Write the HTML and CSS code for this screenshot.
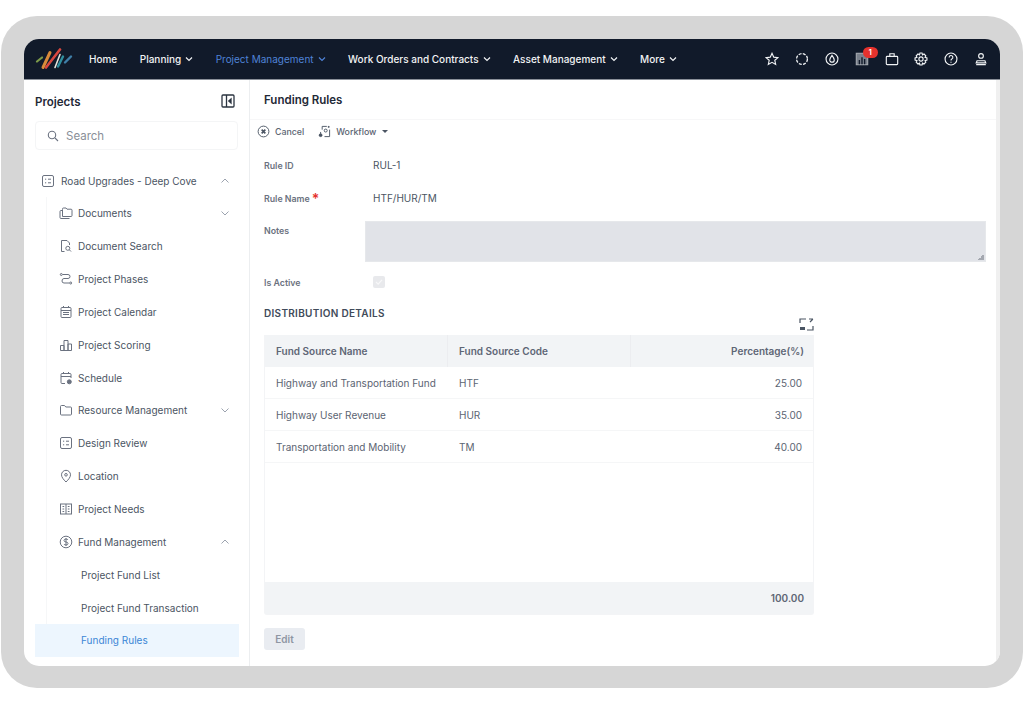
FILE: index.html
```html
<!DOCTYPE html>
<html lang="en">
<head>
    <meta charset="UTF-8">
    <meta name="viewport" content="width=device-width, initial-scale=1.0">
    <title>Funding Rules</title>
    <link rel="stylesheet" href="styles.css">
</head>
<body>
    <div class="frame">
        <div class="app">
            <!-- Top navigation -->
            <header class="topbar">
                <svg class="logo" width="38" height="22" viewBox="0 0 38 22">
                    <path d="M2 13.5 L7 9.5" stroke="#7c9a4a" stroke-width="2.2" stroke-linecap="round"/>
                    <path d="M8 19.5 L15 4.5" stroke="#d98a3a" stroke-width="3" stroke-linecap="round"/>
                    <path d="M11 19.5 L25 1.5" stroke="#d9473f" stroke-width="2.6" stroke-linecap="round"/>
                    <path d="M20 19.5 L25 6.5" stroke="#e8e4dc" stroke-width="1.6" stroke-linecap="round"/>
                    <path d="M23 18.5 L28 8.5" stroke="#2f8f9f" stroke-width="2.4" stroke-linecap="round"/>
                    <path d="M30 14.5 L36 8.5" stroke="#3f7fa8" stroke-width="2.4" stroke-linecap="round"/>
                </svg>
                <nav class="menu">
                    <a class="menu-item">Home</a>
                    <a class="menu-item">Planning <svg class="caret" viewBox="0 0 8 8"><path d="M1 2.5 L4 5.5 L7 2.5"/></svg></a>
                    <a class="menu-item active">Project Management <svg class="caret" viewBox="0 0 8 8"><path d="M1 2.5 L4 5.5 L7 2.5"/></svg></a>
                    <a class="menu-item">Work Orders and Contracts <svg class="caret" viewBox="0 0 8 8"><path d="M1 2.5 L4 5.5 L7 2.5"/></svg></a>
                    <a class="menu-item">Asset Management <svg class="caret" viewBox="0 0 8 8"><path d="M1 2.5 L4 5.5 L7 2.5"/></svg></a>
                    <a class="menu-item">More <svg class="caret" viewBox="0 0 8 8"><path d="M1 2.5 L4 5.5 L7 2.5"/></svg></a>
                </nav>
                <div class="tools">
                    <svg class="tool" viewBox="0 0 16 16"><path d="M8 1.5 L10 5.9 L14.8 6.4 L11.2 9.5 L12.2 14.2 L8 11.8 L3.8 14.2 L4.8 9.5 L1.2 6.4 L6 5.9 Z"/></svg>
                    <svg class="tool" viewBox="0 0 16 16"><circle cx="8" cy="8" r="6.2" stroke-width="1.5" stroke-dasharray="3.4 1.5"/></svg>
                    <svg class="tool" viewBox="0 0 16 16"><circle cx="8" cy="8" r="6.8"/><path d="M8 3.8 C9.6 6 10.6 7.4 10.6 9 A2.6 2.6 0 0 1 5.4 9 C5.4 7.4 6.4 6 8 3.8 Z"/></svg>
                    <span class="tool-badge">
                        <svg class="tool" viewBox="0 0 16 16"><rect x="1.5" y="1.5" width="13" height="13" fill="#7a818c" stroke="#a2a7ae"/><path d="M5 14 V9 M8 14 V6 M11 14 V8" stroke="#111a2a" stroke-width="1.6"/></svg>
                        <span class="badge">1</span>
                    </span>
                    <svg class="tool" viewBox="0 0 16 16"><rect x="1.5" y="5" width="13" height="9.5" rx="1"/><path d="M5.5 5 V2 H10.5 V5"/></svg>
                    <svg class="tool" viewBox="0 0 16 16"><path d="M6.8 1.2 H9.2 L9.7 3.2 L11.5 2.3 L13.5 4.3 L12.6 6.1 L14.8 6.8 V9.2 L12.6 9.9 L13.5 11.7 L11.5 13.7 L9.7 12.8 L9.2 14.8 H6.8 L6.3 12.8 L4.5 13.7 L2.5 11.7 L3.4 9.9 L1.2 9.2 V6.8 L3.4 6.1 L2.5 4.3 L4.5 2.3 L6.3 3.2 Z"/><circle cx="8" cy="8" r="2.4"/></svg>
                    <svg class="tool" viewBox="0 0 16 16"><circle cx="8" cy="8" r="6.8"/><path d="M5.9 6.2 A2.1 2.1 0 1 1 8.9 8 C8.2 8.4 8 8.8 8 9.8 M8 11 V12.2"/></svg>
                    <svg class="tool" viewBox="0 0 16 16"><circle cx="8" cy="4.5" r="2.7"/><path d="M3.5 10 H12.5 L13.5 12.5 H2.5 Z M2.5 14.5 H13.5"/></svg>
                </div>
            </header>

            <div class="body">
                <!-- Left tree -->
                <aside class="sidebar">
                    <div class="side-head">
                        <h2>Projects</h2>
                        <svg width="14" height="14" viewBox="0 0 14 14" class="collapse"><rect x="1" y="1" width="12" height="12" rx="1"/><path d="M5.5 1 V13"/><path d="M10 5 L7.8 7 L10 9 Z" fill="#2b3440"/></svg>
                    </div>
                    <div class="search">
                        <svg width="12" height="12" viewBox="0 0 12 12" class="ico"><circle cx="5" cy="5" r="3.7"/><path d="M8 8 L11 11"/></svg>
                        <span>Search</span>
                    </div>
                    <div class="root">
                        <svg class="ico" viewBox="0 0 14 14"><rect x="1.5" y="1.5" width="11" height="11" rx="1.5"/><path d="M4 5.2 H5.2 M7 5.2 H10 M4 8.8 H5.2 M7 8.8 H10"/></svg>
                        <span class="grow">Road Upgrades - Deep Cove</span>
                        <svg class="chev" viewBox="0 0 10 10"><path d="M1.5 6.5 L5 3 L8.5 6.5"/></svg>
                    </div>
                    <ul class="tree">
                        <li><svg class="ico" viewBox="0 0 14 14"><path d="M3.5 3.5 V3 Q3.5 2 4.5 2 H7 L8 3.2 H12 Q13 3.2 13 4.2 V9.5 Q13 10.5 12 10.5 H3.5 Z"/><path d="M3.5 4.5 H2 Q1 4.5 1 5.5 V11.5 Q1 12.5 2 12.5 H10.5"/></svg><span class="grow">Documents</span><svg class="chev" viewBox="0 0 10 10"><path d="M1.5 3.5 L5 7 L8.5 3.5"/></svg></li>
                        <li><svg class="ico" viewBox="0 0 14 14"><path d="M5.5 12.5 H2.5 V1.5 H8 L10.5 4 V6"/><circle cx="8.8" cy="9.3" r="2"/><path d="M10.3 10.8 L12 12.5"/></svg><span>Document Search</span></li>
                        <li><svg class="ico" viewBox="0 0 14 14"><path d="M3.5 2.5 H9 Q11 2.5 11 4.5 Q11 6.5 9 6.5 H5 Q3 6.5 3 9 Q3 11 5 11 H10.5"/><circle cx="2.3" cy="2.5" r="1"/><circle cx="11.7" cy="11" r="1"/></svg><span>Project Phases</span></li>
                        <li><svg class="ico" viewBox="0 0 14 14"><rect x="2" y="2.5" width="10" height="10" rx="1"/><path d="M2 5.5 H12 M4.5 1 V3 M9.5 1 V3 M4 7.5 H10 M4 9.5 H10" /></svg><span>Project Calendar</span></li>
                        <li><svg class="ico" viewBox="0 0 14 14"><path d="M1.5 12.5 V7.5 H5 V12.5 Z M5 12.5 V2.5 H9 V12.5 Z M9 12.5 V6 H12.5 V12.5 Z"/></svg><span>Project Scoring</span></li>
                        <li><svg class="ico" viewBox="0 0 14 14"><path d="M6 12.5 H3 Q2 12.5 2 11.5 V3.5 Q2 2.5 3 2.5 H11 Q12 2.5 12 3.5 V7 M2 5.5 H12 M4.5 1 V3 M9.5 1 V3"/><circle cx="10.3" cy="10.8" r="2" fill="#6b7280"/></svg><span>Schedule</span></li>
                        <li><svg class="ico" viewBox="0 0 14 14"><path d="M1.5 11 V3.5 Q1.5 2.5 2.5 2.5 H5.5 L6.8 4 H11.5 Q12.5 4 12.5 5 V11 Q12.5 12 11.5 12 H2.5 Q1.5 12 1.5 11 Z"/></svg><span class="grow">Resource Management</span><svg class="chev" viewBox="0 0 10 10"><path d="M1.5 3.5 L5 7 L8.5 3.5"/></svg></li>
                        <li><svg class="ico" viewBox="0 0 14 14"><rect x="1.5" y="1.5" width="11" height="11" rx="1.5"/><path d="M4 5.2 H5.2 M7 5.2 H10 M4 8.8 H5.2 M7 8.8 H10"/></svg><span>Design Review</span></li>
                        <li><svg class="ico" viewBox="0 0 14 14"><path d="M7 13 C4.5 10.5 2.5 8.2 2.5 5.8 A4.5 4.5 0 0 1 11.5 5.8 C11.5 8.2 9.5 10.5 7 13 Z"/><circle cx="7" cy="5.8" r="1.3"/></svg><span>Location</span></li>
                        <li><svg class="ico" viewBox="0 0 14 14"><rect x="1.5" y="2" width="11" height="10"/><path d="M7 2 V12 M3.5 4.5 H5.2 M3.5 7 H5.2 M3.5 9.5 H5.2 M8.8 4.5 H10.5 M8.8 7 H10.5 M8.8 9.5 H10.5"/></svg><span>Project Needs</span></li>
                        <li><svg class="ico" viewBox="0 0 14 14"><circle cx="7" cy="7" r="5.8"/><path d="M9 5 Q8.6 4 7 4 Q5 4 5 5.5 Q5 6.8 7 7 Q9 7.2 9 8.5 Q9 10 7 10 Q5.3 10 5 9 M7 3 V11"/></svg><span class="grow">Fund Management</span><svg class="chev" viewBox="0 0 10 10"><path d="M1.5 6.5 L5 3 L8.5 6.5"/></svg></li>
                        <li class="sub">Project Fund List</li>
                        <li class="sub">Project Fund Transaction</li>
                        <li class="sub current">Funding Rules</li>
                    </ul>
                </aside>

                <!-- Form -->
                <main class="content">
                    <h1>Funding Rules</h1>
                    <div class="actions">
                        <span class="action">
                            <svg width="13" height="13" viewBox="0 0 14 14" class="ico-dark"><circle cx="7" cy="7" r="5.8"/><path d="M5 5 L9 9 M9 5 L5 9" stroke-width="1.8"/></svg>
                            Cancel
                        </span>
                        <span class="action">
                            <svg width="13" height="13" viewBox="0 0 14 14" class="ico-dark"><path d="M4.5 5 V1.5 H9.5 M12.5 5 V12.5 H7"/><circle cx="8.3" cy="6" r="1.6"/><circle cx="2.8" cy="11" r="1.5" fill="#4b5563"/><path d="M11.5 1 V3 M10.5 2 H12.5 M2.8 9.5 V7.5"/></svg>
                            Workflow
                            <span class="drop"></span>
                        </span>
                    </div>

                    <div class="form">
                        <label>Rule ID</label>
                        <div class="value">RUL-1</div>
                        <label>Rule Name<span class="req">*</span></label>
                        <div class="value">HTF/HUR/TM</div>
                        <label class="notes-label">Notes</label>
                        <textarea class="notes" disabled></textarea>
                        <label class="active-label">Is Active</label>
                        <div class="active-box"><span class="check"><svg width="8" height="8" viewBox="0 0 8 8"><path d="M1 4 L3.2 6.2 L7 1.8"/></svg></span></div>
                    </div>

                    <div class="section-head">
                        <h3>DISTRIBUTION DETAILS</h3>
                        <svg width="15" height="13" viewBox="0 0 15 13" class="expand"><path d="M1 5 V1 H7 M10 1 H14 M14 1 L11 4 M14 8 V12 H8"/><rect x="1" y="9" width="5" height="3" fill="#4b5563" stroke="none"/></svg>
                    </div>

                    <div class="grid">
                        <div class="row head">
                            <div>Fund Source Name</div>
                            <div>Fund Source Code</div>
                            <div class="num">Percentage(%)</div>
                        </div>
                        <div class="row">
                            <div>Highway and Transportation Fund</div>
                            <div>HTF</div>
                            <div class="num pad">25.00</div>
                        </div>
                        <div class="row">
                            <div>Highway User Revenue</div>
                            <div>HUR</div>
                            <div class="num pad">35.00</div>
                        </div>
                        <div class="row">
                            <div>Transportation and Mobility</div>
                            <div>TM</div>
                            <div class="num pad">40.00</div>
                        </div>
                        <div class="blank"></div>
                        <div class="total">100.00</div>
                    </div>

                    <button class="edit">Edit</button>
                </main>
            </div>
        </div>
    </div>
</body>
</html>
```
FILE: styles.css
```css
html, body {
    margin: 0;
    padding: 0;
    background: #fff;
    font-family: Inter, "Liberation Sans", sans-serif;
}

body {
    padding: 16px 1px 0;
    height: 689px;
    overflow: hidden;
}

.frame {
    background: #d6d6d6;
    border-radius: 36px;
    padding: 23px;
    height: 672px;
    box-sizing: border-box;
}

.app {
    background: #fff;
    border-radius: 15px;
    height: 627px;
    overflow: hidden;
    display: flex;
    flex-direction: column;
}

/* top bar */
.topbar {
    height: 41px;
    flex: none;
    background: #111a2a;
    display: flex;
    align-items: center;
    padding: 0 12px 0 11px;
    border-bottom: 1px solid #8a9099;
    box-sizing: border-box;
}

.logo {
    flex: none;
    margin-right: 16px;
}

.menu {
    display: flex;
    gap: 22.5px;
    flex: 1;
}

.menu-item {
    color: #f1f3f5;
    font-size: 10px;
    font-weight: 500;
    display: flex;
    align-items: center;
    gap: 4px;
    white-space: nowrap;
}

.menu-item.active {
    color: #4f83d8;
    font-weight: 400;
}

.caret {
    width: 8px;
    height: 8px;
    fill: none;
    stroke: currentColor;
    stroke-width: 1.2;
}

.tools {
    display: flex;
    align-items: center;
    gap: 15.8px;
}

.tool {
    width: 14px;
    height: 14px;
    fill: none;
    stroke: #f1f3f5;
    stroke-width: 1.3;
    display: block;
}

.tool-badge {
    position: relative;
    display: block;
}

.badge {
    position: absolute;
    top: -5px;
    left: 8px;
    width: 15px;
    height: 11px;
    border-radius: 6px;
    background: #e5322d;
    color: #fff;
    font-size: 7px;
    font-weight: 700;
    text-align: center;
    line-height: 11px;
}

/* layout below bar */
.body {
    flex: 1;
    display: flex;
    min-height: 0;
}

.sidebar {
    width: 226px;
    flex: none;
    box-sizing: border-box;
    border-right: 1px solid #eceef0;
    padding: 0 10px 0 11px;
    overflow: hidden;
}

.side-head {
    display: flex;
    justify-content: space-between;
    align-items: center;
    padding-right: 4px;
    height: 41px;
}

.side-head h2 {
    margin: 0;
    font-size: 11.5px;
    font-weight: 600;
    color: #1f2937;
    position: relative;
    top: 1px;
}

.collapse {
    fill: none;
    stroke: #2b3440;
    stroke-width: 1.3;
}

.search {
    height: 29px;
    border: 1px solid #f4f5f6;
    border-radius: 4px;
    display: flex;
    align-items: center;
    gap: 7px;
    padding-left: 11px;
    font-size: 11.5px;
    color: #8a8f98;
    width: 203px;
    box-sizing: border-box;
}

.ico {
    width: 14px;
    height: 14px;
    fill: none;
    stroke: #6b7280;
    stroke-width: 1;
    flex: none;
}

.search .ico {
    width: 12px;
    height: 12px;
    stroke-width: 1.1;
}

.root {
    display: flex;
    align-items: center;
    gap: 6px;
    height: 32px;
    margin-top: 15px;
    padding: 0 9px 0 6px;
    font-size: 10px;
    color: #4b5563;
}

.grow {
    flex: 1;
}

.chev {
    width: 10px;
    height: 10px;
    fill: none;
    stroke: #9ca3af;
    stroke-width: 1;
    flex: none;
}

.tree {
    list-style: none;
    margin: 0 0 0 11px;
    padding: 0;
    border-left: 1px solid #f6f7f8;
    font-size: 10px;
    color: #4b5563;
}

.tree li {
    height: 32.85px;
    display: flex;
    align-items: center;
    gap: 5px;
    padding: 0 9px 0 12px;
}

.tree li.sub {
    padding-left: 34px;
}

.tree li.current {
    background: #edf6fe;
    color: #3b86d6;
    margin-left: -12px;
    padding-left: 46px;
}

/* main form */
.content {
    flex: 1;
    padding: 0 15px 0 14px;
    border-right: 4px solid #f0f0f0;
    min-width: 0;
}

.content h1 {
    margin: 0 -15px 0 -14px;
    padding-left: 14px;
    height: 39px;
    line-height: 40px;
    font-size: 11.5px;
    font-weight: 600;
    color: #1f2937;
    border-bottom: 1px solid #f7f7f8;
}

.actions {
    display: flex;
    align-items: center;
    gap: 14px;
    height: 22px;
    margin-left: -7px;
    font-size: 8.8px;
    font-weight: 500;
    color: #5b6472;
}

.action {
    display: flex;
    align-items: center;
    gap: 5px;
}

.ico-dark {
    fill: none;
    stroke: #4b5563;
    stroke-width: 1;
}

.drop {
    width: 0;
    height: 0;
    border-left: 3.5px solid transparent;
    border-right: 3.5px solid transparent;
    border-top: 3.5px solid #4b5563;
    margin-left: 1px;
}

.form {
    display: grid;
    grid-template-columns: 101px 1fr;
    grid-template-rows: 33px 33px 41px 26px;
    margin-top: 13px;
    font-size: 8.8px;
    font-weight: 600;
    color: #6b7280;
}

.form label {
    display: flex;
    align-items: center;
    height: 20px;
}

.form .notes-label {
    height: 18px;
}

.value {
    height: 21px;
    line-height: 21px;
    padding-left: 8px;
    font-size: 10px;
    font-weight: 400;
    color: #4b5563;
}

.req {
    color: #e5322d;
    font-size: 14px;
    margin-left: 2px;
    line-height: 1;
    position: relative;
    top: 1px;
}

.notes {
    background: linear-gradient(135deg, transparent 50%, #a4a8b0 50%) no-repeat right 1px bottom 1px / 6px 6px, #e1e3e8;
    border: 1px solid #e6e8eb;
    box-sizing: border-box;
    width: 621px;
    height: 41px;
    margin: 0;
    padding: 0;
    display: block;
    resize: none;
}

.form .active-label {
    align-self: end;
    height: 12px;
}

.active-box {
    padding-left: 8px;
    align-self: end;
}

.check {
    width: 12px;
    height: 12px;
    display: flex;
    align-items: center;
    justify-content: center;
    background: #e8e9ec;
    border-radius: 2px;
}

.check svg {
    fill: none;
    stroke: #f7f7f8;
    stroke-width: 1.2;
}

.section-head {
    width: 550px;
    height: 47px;
    position: relative;
}

.section-head h3 {
    margin: 0;
    padding-top: 19px;
    font-size: 10px;
    font-weight: 600;
    letter-spacing: 0.3px;
    color: #414b5a;
}

.expand {
    position: absolute;
    right: 0;
    bottom: 4px;
    fill: none;
    stroke: #4b5563;
    stroke-width: 1.2;
}

.grid {
    width: 550px;
    border: 1px solid #f3f4f6;
    border-top: 0;
    border-radius: 0 0 3px 3px;
    box-sizing: border-box;
    font-size: 10px;
    color: #5b6472;
}

.row {
    display: grid;
    grid-template-columns: 183px 183px 1fr;
    height: 32px;
    align-items: center;
    border-bottom: 1px solid #f5f6f7;
    box-sizing: border-box;
}

.row > div {
    padding-left: 11px;
}

.row.head {
    background: #f2f4f6;
    color: #5e6675;
    font-weight: 600;
    border-bottom: 0;
    align-items: stretch;
}

.row.head > div {
    display: flex;
    align-items: center;
    border-right: 1px solid #ecedf0;
}

.row.head > div:last-child {
    border-right: 0;
}

.row .num {
    text-align: right;
    padding-left: 0;
    padding-right: 9px;
    justify-content: flex-end;
}

.row .num.pad {
    padding-right: 11px;
}

.blank {
    height: 119px;
}

.total {
    height: 32px;
    line-height: 32px;
    background: #f2f4f6;
    text-align: right;
    padding-right: 9px;
    font-weight: 600;
    color: #5e6675;
}

.edit {
    display: block;
    margin-top: 13px;
    width: 41px;
    height: 22px;
    border: none;
    border-radius: 3px;
    background: #e9ecf1;
    color: #8f96a3;
    font-family: inherit;
    font-size: 10px;
    font-weight: 600;
    padding: 0;
}
```
